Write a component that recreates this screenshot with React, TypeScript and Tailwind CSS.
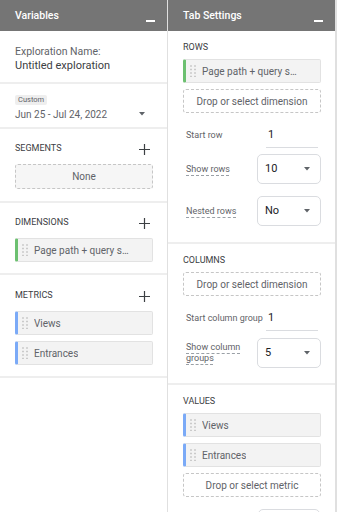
const font = { fontFamily: "Roboto, 'Noto Sans', Arial, sans-serif" };

function Minus() {
  return <div className="mt-[11px] h-[2px] w-[9px] bg-white" />;
}

function Header({ title }: { title: string }) {
  return (
    <div className="flex h-[31px] items-center justify-between bg-[#757575] pl-[15px] pr-[12px]">
      <span className="text-[10.5px] font-medium text-white">{title}</span>
      <Minus />
    </div>
  );
}

function Plus() {
  return (
    <svg width="11" height="11" viewBox="0 0 11 11" className="text-[#3c4043]">
      <path d="M5.5 0v11M0 5.5h11" stroke="currentColor" strokeWidth="1.2" />
    </svg>
  );
}

function Caret() {
  return (
    <svg width="6" height="4" viewBox="0 0 6 4">
      <path d="M0 0h6L3 3.5z" fill="#5f6368" />
    </svg>
  );
}

function Handle() {
  return (
    <svg width="6" height="12" viewBox="0 0 6 12" className="ml-[4px] shrink-0">
      {[1, 4.5, 8, 11.5].map((y) =>
        [1, 5].map((x) => <rect key={`${x}-${y}`} x={x - 0.75} y={y - 0.75} width="1.5" height="1.5" fill="#bdbdbd" />)
      )}
    </svg>
  );
}

function Chip({ label, color }: { label: string; color: "green" | "blue" }) {
  return (
    <div
      className={`flex h-[24px] items-center rounded-[2px] border border-[#e2e2e2] border-l-[3px] bg-[#f3f3f3] ${
        color === "green" ? "border-l-[#6cc070]" : "border-l-[#7baaf7]"
      }`}
    >
      <Handle />
      <span className="ml-[6px] truncate text-[10px] text-[#5f6368]">{label}</span>
    </div>
  );
}

function DropBox({ label, filled }: { label: string; filled?: boolean }) {
  return (
    <div
      className={`flex h-[24px] items-center justify-center rounded-[3px] border border-dashed border-[#c6c6c6] text-[10px] text-[#5f6368] ${
        filled ? "bg-[#f6f6f6]" : "bg-white"
      }`}
    >
      {label}
    </div>
  );
}

function Divider() {
  return <div className="h-[2px] bg-[#eeeeee]" />;
}

function SectionTitle({ title, plus }: { title: string; plus?: boolean }) {
  return (
    <div className="flex h-[14px] items-center justify-between pr-[3px]">
      <span className="text-[9px] uppercase text-[#3c4043]">{title}</span>
      {plus && <Plus />}
    </div>
  );
}

function Select({ value }: { value: string }) {
  return (
    <div className="flex h-[30px] w-[64px] items-center justify-between rounded-[5px] border border-[#dadce0] pl-[7px] pr-[10px] text-[11px] text-[#202124]">
      <span>{value}</span>
      <Caret />
    </div>
  );
}

function InputRow({ label, value }: { label: string; value: string }) {
  return (
    <div className="flex h-[24px] items-center justify-between pl-[3px] pr-[3px]">
      <span className="text-[9px] text-[#5f6368]">{label}</span>
      <div className="flex h-[23px] w-[52px] items-center border-b border-[#dadce0] pl-[2px] text-[11px] text-[#202124]">
        {value}
      </div>
    </div>
  );
}

function SelectRow({ label, value }: { label: React.ReactNode; value: string }) {
  return (
    <div className="flex items-center justify-between pl-[3px]">
      <div className="w-[70px] text-[9px] leading-[11px] text-[#5f6368]">
        <span className="underline decoration-dashed decoration-[#9aa0a6] underline-offset-[3px]">{label}</span>
      </div>
      <Select value={value} />
    </div>
  );
}

export default function App() {
  return (
    <div className="flex h-[512px] w-[338px] overflow-hidden bg-white" style={font}>
      {/* Variables */}
      <div className="w-[168px] shrink-0 border-r border-[#e0e0e0]">
        <Header title="Variables" />
        <div className="h-[51px] pl-[15px] pt-[14px]">
          <div className="text-[10.5px] leading-[14px] text-[#5f6368]">Exploration Name:</div>
          <div className="text-[11px] leading-[14px] text-[#3c4043]">Untitled exploration</div>
        </div>
        <Divider />
        <div className="flex h-[43px] flex-col items-start pl-[15px] pr-[22px] pt-[11px]">
          <div className="flex h-[10px] items-center rounded-[2px] bg-[#eeeeee] px-[3px] text-[7.5px] leading-[10px] text-[#5f6368]">
            Custom
          </div>
          <div className="mt-[2px] flex h-[14px] w-full items-center justify-between">
            <span className="text-[10px] text-[#5f6368]">Jun 25 - Jul 24, 2022</span>
            <Caret />
          </div>
        </div>
        <Divider />
        <div className="h-[72px] pl-[15px] pr-[14px] pt-[13px]">
          <SectionTitle title="Segments" plus />
          <div className="mt-[8px]">
            <div className="flex h-[25px] items-center justify-center rounded-[3px] border border-dashed border-[#c6c6c6] bg-[#f6f6f6] text-[10px] text-[#5f6368]">
              None
            </div>
          </div>
        </div>
        <Divider />
        <div className="h-[70px] pl-[15px] pr-[14px] pt-[13px]">
          <SectionTitle title="Dimensions" plus />
          <div className="mt-[8px]">
            <Chip label="Page path + query s…" color="green" />
          </div>
        </div>
        <Divider />
        <div className="flex h-[101px] flex-col gap-[6px] pl-[15px] pr-[14px] pt-[14px]">
          <div className="mb-[2px]">
            <SectionTitle title="Metrics" plus />
          </div>
          <Chip label="Views" color="blue" />
          <Chip label="Entrances" color="blue" />
        </div>
        <Divider />
      </div>

      {/* Tab Settings */}
      <div className="w-[167px] shrink-0">
        <Header title="Tab Settings" />
        <div className="h-[211px] pl-[15px] pr-[14px] pt-[10px]">
          <SectionTitle title="Rows" />
          <div className="mt-[4px]">
            <Chip label="Page path + query s…" color="green" />
          </div>
          <div className="mt-[6px]">
            <DropBox label="Drop or select dimension" />
          </div>
          <div className="mt-[11px]">
            <InputRow label="Start row" value="1" />
          </div>
          <div className="mt-[6px]">
            <SelectRow label="Show rows" value="10" />
          </div>
          <div className="mt-[12px]">
            <SelectRow label="Nested rows" value="No" />
          </div>
        </div>
        <Divider />
        <div className="h-[139px] pl-[15px] pr-[14px] pt-[10px]">
          <SectionTitle title="Columns" />
          <div className="mt-[4px]">
            <DropBox label="Drop or select dimension" />
          </div>
          <div className="mt-[11px]">
            <InputRow label="Start column group" value="1" />
          </div>
          <div className="mt-[7px]">
            <SelectRow
              label={
                <>
                  Show column
                  <br />
                  groups
                </>
              }
              value="5"
            />
          </div>
        </div>
        <Divider />
        <div className="pl-[15px] pr-[14px] pt-[10px]">
          <SectionTitle title="Values" />
          <div className="mt-[4px] flex flex-col gap-[6px]">
            <Chip label="Views" color="blue" />
            <Chip label="Entrances" color="blue" />
            <DropBox label="Drop or select metric" />
          </div>
          <div className="mt-[12px] flex justify-end pr-[1px]">
            <div className="h-[30px] w-[62px] rounded-[5px] border border-[#dadce0]" />
          </div>
        </div>
      </div>

      {/* scroll track */}
      <div className="w-[2px] shrink-0 bg-[#e0e0e0]" />
    </div>
  );
}
